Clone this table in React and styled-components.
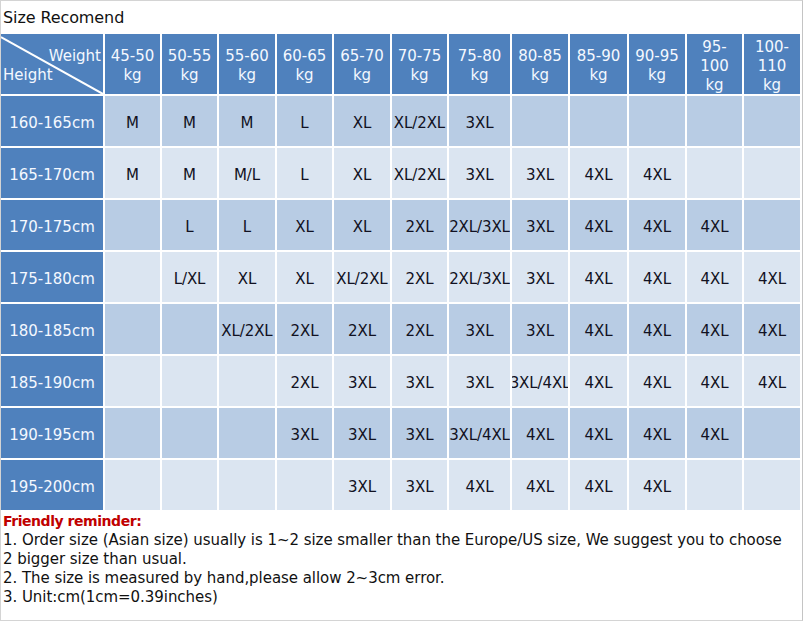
import React from 'react';
import styled, { createGlobalStyle } from 'styled-components';

const GlobalStyle = createGlobalStyle`
  html, body {
    margin: 0;
    padding: 0;
    background: #ffffff;
  }
  body {
    font-family: 'DejaVu Sans', Verdana, sans-serif;
  }
`;

const weights = [
  ['45-50', 'kg'],
  ['50-55', 'kg'],
  ['55-60', 'kg'],
  ['60-65', 'kg'],
  ['65-70', 'kg'],
  ['70-75', 'kg'],
  ['75-80', 'kg'],
  ['80-85', 'kg'],
  ['85-90', 'kg'],
  ['90-95', 'kg'],
  ['95-', '100', 'kg'],
  ['100-', '110', 'kg'],
];

const rows = [
  ['160-165cm', ['M', 'M', 'M', 'L', 'XL', 'XL/2XL', '3XL', '', '', '', '', '']],
  ['165-170cm', ['M', 'M', 'M/L', 'L', 'XL', 'XL/2XL', '3XL', '3XL', '4XL', '4XL', '', '']],
  ['170-175cm', ['', 'L', 'L', 'XL', 'XL', '2XL', '2XL/3XL', '3XL', '4XL', '4XL', '4XL', '']],
  ['175-180cm', ['', 'L/XL', 'XL', 'XL', 'XL/2XL', '2XL', '2XL/3XL', '3XL', '4XL', '4XL', '4XL', '4XL']],
  ['180-185cm', ['', '', 'XL/2XL', '2XL', '2XL', '2XL', '3XL', '3XL', '4XL', '4XL', '4XL', '4XL']],
  ['185-190cm', ['', '', '', '2XL', '3XL', '3XL', '3XL', '3XL/4XL', '4XL', '4XL', '4XL', '4XL']],
  ['190-195cm', ['', '', '', '3XL', '3XL', '3XL', '3XL/4XL', '4XL', '4XL', '4XL', '4XL', '']],
  ['195-200cm', ['', '', '', '', '3XL', '3XL', '4XL', '4XL', '4XL', '4XL', '', '']],
];

const Sheet = styled.div`
  width: 801px;
  height: 619px;
  border: 1px solid #d4d4d4;
  border-right-color: #c4c4c4;
  background: #ffffff;
  display: flex;
  flex-direction: column;
`;

const Title = styled.div`
  height: 33px;
  padding-left: 2px;
  display: flex;
  align-items: center;
  font-size: 16px;
  color: #111111;
  letter-spacing: -0.1px;
`;

const Grid = styled.div`
  display: grid;
  grid-template-columns: 102px 55px 55px 56px 55px 56px 55px 61px 56px 57px 56px 55px 56px;
  grid-template-rows: 60px repeat(8, 50px);
  gap: 2px;
  background: #ffffff;
  width: 801px;
`;

const HeadCell = styled.div`
  box-sizing: border-box;
  padding-top: 4px;
  background: #4f81bd;
  color: #f4f8ff;
  font-size: 15px;
  line-height: 19px;
  display: flex;
  flex-direction: column;
  align-items: center;
  justify-content: center;
  text-align: center;
`;

const CornerCell = styled.div`
  position: relative;
  background: #4f81bd;
  color: #f4f8ff;
  font-size: 15px;
  line-height: 19px;
  overflow: hidden;
`;

const CornerLine = styled.svg`
  position: absolute;
  inset: 0;
`;

const CornerWeight = styled.span`
  position: absolute;
  right: 2px;
  top: 13px;
`;

const CornerHeight = styled.span`
  position: absolute;
  left: 2px;
  top: 32px;
`;

const RowHead = styled.div`
  box-sizing: border-box;
  padding-top: 4px;
  background: #4f81bd;
  color: #f4f8ff;
  font-size: 15px;
  display: flex;
  align-items: center;
  justify-content: center;
`;

const Cell = styled.div`
  box-sizing: border-box;
  padding-top: 4px;
  background: ${(p) => (p.$odd ? '#b8cce4' : '#dbe5f1')};
  color: #111122;
  font-size: 15px;
  display: flex;
  align-items: center;
  justify-content: center;
  overflow: hidden;
  white-space: nowrap;
  letter-spacing: -0.1px;
`;

const Notes = styled.div`
  padding: 2px 0 0 2px;
  font-size: 15px;
  line-height: 19px;
  color: #111111;
  letter-spacing: -0.05px;
`;

const Reminder = styled.div`
  color: #c00000;
  font-weight: bold;
  font-size: 14px;
  letter-spacing: -0.45px;
`;

const App = () => (
  <>
    <GlobalStyle />
    <Sheet>
      <Title>Size Recomend</Title>
      <Grid>
        <CornerCell>
          <CornerLine width="102" height="60" viewBox="0 0 102 60">
            <line x1="0" y1="3" x2="102" y2="60" stroke="#ffffff" strokeWidth="2" />
          </CornerLine>
          <CornerWeight>Weight</CornerWeight>
          <CornerHeight>Height</CornerHeight>
        </CornerCell>
        {weights.map((w) => (
          <HeadCell key={w.join('')}>
            {w.map((line) => (
              <span key={line}>{line}</span>
            ))}
          </HeadCell>
        ))}
        {rows.map(([height, sizes], i) => (
          <React.Fragment key={height}>
            <RowHead>{height}</RowHead>
            {sizes.map((size, j) => (
              <Cell key={j} $odd={i % 2 === 0}>
                {size}
              </Cell>
            ))}
          </React.Fragment>
        ))}
      </Grid>
      <Notes>
        <Reminder>Friendly reminder:</Reminder>
        <div>
          1. Order size (Asian size) usually is 1~2 size smaller than the Europe/US size, We suggest you to choose
        </div>
        <div>2 bigger size than usual.</div>
        <div>2. The size is measured by hand,please allow 2~3cm error.</div>
        <div>3. Unit:cm(1cm=0.39inches)</div>
      </Notes>
    </Sheet>
  </>
);

export default App;
